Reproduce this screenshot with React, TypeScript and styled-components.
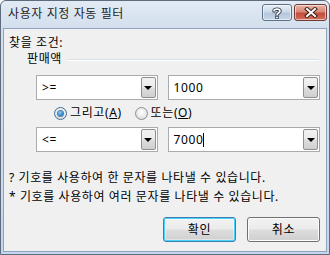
import React from 'react';
import styled, { createGlobalStyle } from 'styled-components';

const GlobalStyle = createGlobalStyle`
  html, body {
    margin: 0;
    padding: 0;
    background: #ffffff;
  }
  body {
    font-family: "Noto Sans", "Noto Sans CJK KR", sans-serif;
    font-size: 12px;
    letter-spacing: 0.6px;
  }
`;

// Window frame (Win7 basic look)
const Window = styled.div`
  box-sizing: border-box;
  width: 330px;
  height: 255px;
  border: 1px solid #5d6b7c;
  border-radius: 6px 6px 0 0;
  background: linear-gradient(180deg, #e2eaf4 0px, #d3dfee 27px, #c5d7ee 100%);
  padding: 0 2px 2px 2px;
  display: flex;
  flex-direction: column;
`;

const TitleBar = styled.div`
  height: 27px;
  display: flex;
  align-items: flex-start;
  padding-left: 5px;
`;

const Title = styled.div`
  margin-top: 5px;
  line-height: 16px;
  color: #1e1e1e;
  flex: 1;
`;

const CaptionButton = styled.div<{ $close?: boolean }>`
  box-sizing: border-box;
  margin-top: 3px;
  height: 17px;
  width: ${(p) => (p.$close ? '33px' : '30px')};
  margin-left: ${(p) => (p.$close ? '2px' : '0')};
  border: 1px solid ${(p) => (p.$close ? '#6d3a34' : '#5f7185')};
  border-radius: 3px;
  background: ${(p) =>
    p.$close
      ? 'linear-gradient(180deg, #e9b3a6 0%, #d98a7a 45%, #c44c3b 55%, #d1705d 100%)'
      : 'linear-gradient(180deg, #e8eef6 0%, #ccd9e8 45%, #b5c7dc 55%, #c7d6e8 100%)'};
  box-shadow: inset 0 0 0 1px rgba(255, 255, 255, 0.55);
  display: flex;
  align-items: center;
  justify-content: center;
`;

const Client = styled.div`
  flex: 1;
  border: 1px solid #8fa3bb;
  background: #f0f0f0;
  display: flex;
  flex-direction: column;
  padding: 0 6px 0 5px;
  color: #000;
`;

const Heading = styled.div`
  margin-top: 6px;
  line-height: 16px;
`;

const GroupRow = styled.div`
  display: flex;
  align-items: center;
  height: 16px;
  padding-left: 18px;
`;

const GroupLabel = styled.span`
  line-height: 16px;
  margin-right: 6px;
`;

const Groove = styled.div`
  flex: 1;
  height: 0;
  border-top: 1px solid #d5dfe5;
  border-bottom: 1px solid #ffffff;
  margin-top: 1px;
  margin-right: 1px;
`;

const ComboRow = styled.div<{ $top: number }>`
  display: flex;
  gap: 10px;
  margin-top: ${(p) => p.$top}px;
  padding-left: 27px;
`;

const ComboBox = styled.div<{ $width: number }>`
  box-sizing: border-box;
  width: ${(p) => p.$width}px;
  height: 25px;
  border: 1px solid #a9abaf;
  background: #ffffff;
  display: flex;
  align-items: stretch;
  padding: 1px;
`;

const ComboText = styled.div`
  flex: 1;
  display: flex;
  align-items: center;
  padding-left: 4px;
  line-height: 16px;
  color: #000;
`;

const Caret = styled.span`
  display: inline-block;
  width: 1px;
  height: 14px;
  background: #000;
  margin-left: 0;
`;

const DropButton = styled.div`
  box-sizing: border-box;
  width: 15px;
  border: 1px solid #8e8f8f;
  border-radius: 2px;
  background: linear-gradient(180deg, #f2f2f2 0%, #ebebeb 45%, #dddddd 55%, #cfcfcf 100%);
  display: flex;
  align-items: center;
  justify-content: center;
`;

const Arrow = styled.div`
  width: 0;
  height: 0;
  border-left: 4px solid transparent;
  border-right: 4px solid transparent;
  border-top: 4px solid #000;
  margin-top: 1px;
`;

const RadioRow = styled.div`
  display: flex;
  align-items: center;
  gap: 13px;
  margin-top: 5px;
  padding-left: 45px;
  height: 16px;
`;

const RadioItem = styled.label`
  display: flex;
  align-items: center;
  gap: 3px;
  line-height: 16px;
`;

const RadioCircle = styled.span<{ $checked?: boolean }>`
  box-sizing: border-box;
  width: 13px;
  height: 13px;
  border-radius: 50%;
  border: 1px solid ${(p) => (p.$checked ? '#3d6f9a' : '#8e8f8f')};
  background: radial-gradient(circle at 50% 40%, #ffffff 0%, #e6e6e6 60%, #c8c8c8 100%);
  display: flex;
  align-items: center;
  justify-content: center;
`;

const RadioDot = styled.span`
  width: 5px;
  height: 5px;
  border-radius: 50%;
  background: radial-gradient(circle at 40% 35%, #9fd4f4 0%, #2a8ad4 55%, #0d4f85 100%);
  box-shadow: 0 0 0 1px #4a7ea8;
`;

const HelpText = styled.div<{ $top: number }>`
  margin-top: ${(p) => p.$top}px;
  line-height: 19px;
  color: #000;
`;

const ButtonRow = styled.div`
  display: flex;
  justify-content: flex-end;
  gap: 11px;
  margin-top: 11px;
`;

const PushButton = styled.button<{ $default?: boolean }>`
  box-sizing: border-box;
  width: 73px;
  height: 25px;
  border: 1px solid ${(p) => (p.$default ? '#3c7fb1' : '#707070')};
  border-radius: 3px;
  background: linear-gradient(180deg, #f2f2f2 0%, #ebebeb 48%, #dddddd 52%, #cfcfcf 100%);
  box-shadow: ${(p) =>
    p.$default ? 'inset 0 0 0 1px #48d2fb, inset 0 0 0 2px rgba(255,255,255,0.4)' : 'inset 0 0 0 1px #fcfcfc'};
  font-family: "Noto Sans", "Noto Sans CJK KR", sans-serif;
  font-size: 12px;
  letter-spacing: 0.6px;
  line-height: 16px;
  color: #000;
  padding: 0;
`;

const HelpIcon = () => (
  <svg width="10" height="12" viewBox="0 0 10 12">
    <path
      d="M2 4 C2 1.5 8 1.5 8 4 C8 6 5 6 5 8"
      fill="none"
      stroke="#2b3a4c"
      strokeWidth="3.4"
      strokeLinecap="round"
    />
    <path
      d="M2 4 C2 1.5 8 1.5 8 4 C8 6 5 6 5 8"
      fill="none"
      stroke="#ffffff"
      strokeWidth="1.6"
      strokeLinecap="round"
    />
    <rect x="3.3" y="9" width="3.4" height="3" fill="#2b3a4c" />
    <rect x="4.1" y="9.7" width="1.8" height="1.6" fill="#ffffff" />
  </svg>
);

const CloseIcon = () => (
  <svg width="14" height="11" viewBox="0 0 14 11">
    <path d="M3 2 L11 9 M11 2 L3 9" stroke="#3a1f1a" strokeWidth="4" strokeLinecap="square" />
    <path d="M3 2 L11 9 M11 2 L3 9" stroke="#ffffff" strokeWidth="2" strokeLinecap="square" />
  </svg>
);

const Combo: React.FC<{ width: number; value: string; caret?: boolean }> = ({ width, value, caret }) => (
  <ComboBox $width={width}>
    <ComboText>
      {value}
      {caret && <Caret />}
    </ComboText>
    <DropButton>
      <Arrow />
    </DropButton>
  </ComboBox>
);

const App: React.FC = () => {
  return (
    <>
      <GlobalStyle />
      <Window>
        <TitleBar>
          <Title>사용자 지정 자동 필터</Title>
          <CaptionButton>
            <HelpIcon />
          </CaptionButton>
          <CaptionButton $close>
            <CloseIcon />
          </CaptionButton>
        </TitleBar>
        <Client>
          <Heading>찾을 조건:</Heading>
          <GroupRow>
            <GroupLabel>판매액</GroupLabel>
            <Groove />
          </GroupRow>

          <ComboRow $top={8}>
            <Combo width={122} value=">=" />
            <Combo width={153} value="1000" />
          </ComboRow>

          <RadioRow>
            <RadioItem>
              <RadioCircle $checked>
                <RadioDot />
              </RadioCircle>
              <span>
                그리고(<u>A</u>)
              </span>
            </RadioItem>
            <RadioItem>
              <RadioCircle />
              <span>
                또는(<u>O</u>)
              </span>
            </RadioItem>
          </RadioRow>

          <ComboRow $top={6}>
            <Combo width={122} value="<=" />
            <Combo width={153} value="7000" caret />
          </ComboRow>

          <HelpText $top={16}>? 기호를 사용하여 한 문자를 나타낼 수 있습니다.</HelpText>
          <HelpText $top={0}>* 기호를 사용하여 여러 문자를 나타낼 수 있습니다.</HelpText>

          <ButtonRow>
            <PushButton $default>확인</PushButton>
            <PushButton>취소</PushButton>
          </ButtonRow>
        </Client>
      </Window>
    </>
  );
};

export default App;
